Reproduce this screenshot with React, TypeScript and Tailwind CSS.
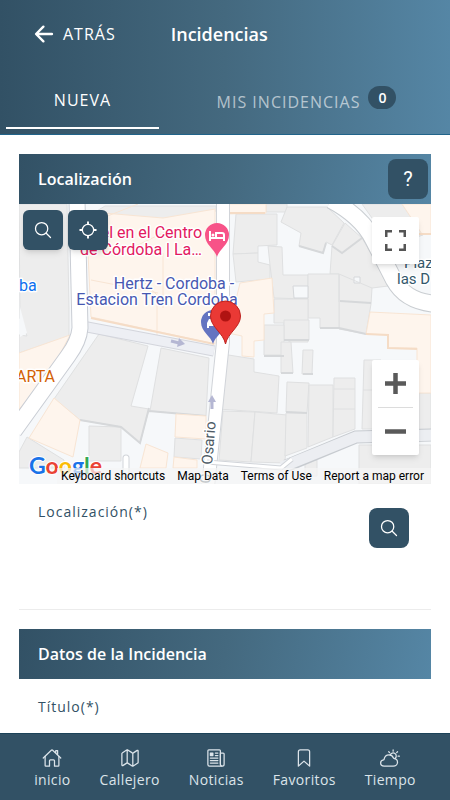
import { useState } from "react";
import {
  IoArrowBack,
  IoBookmarkOutline,
  IoHomeOutline,
  IoLocateOutline,
  IoMapOutline,
  IoNewspaperOutline,
  IoPartlySunnyOutline,
  IoSearchOutline,
} from "react-icons/io5";

const navItems = [
  { label: "inicio", icon: IoHomeOutline },
  { label: "Callejero", icon: IoMapOutline },
  { label: "Noticias", icon: IoNewspaperOutline },
  { label: "Favoritos", icon: IoBookmarkOutline },
  { label: "Tiempo", icon: IoPartlySunnyOutline },
];

function SectionHeading({ title, children }: { title: string; children?: React.ReactNode }) {
  return (
    <div className="flex h-[50px] items-center justify-between bg-linear-100 from-[#325165] via-[#44697f] to-[#5586a5] pl-[19px] pr-[3px]">
      <h2 className="text-base font-semibold text-white">{title}</h2>
      {children}
    </div>
  );
}

function StreetMap() {
  return (
    <svg
      viewBox="19 204 412 280"
      preserveAspectRatio="xMidYMid slice"
      className="block h-full w-full"
      fontFamily="Roboto, sans-serif"
      aria-label="Mapa"
      role="img"
    >
      <rect x="-200" y="204" width="900" height="280" fill="#f6f8fa" />

      {/* buildings */}
      <g fill="#ededed" stroke="#dfe0e1" strokeWidth="1">
        <path d="M19 204h48l2 105v27L19 353v-18l8 1-7-18z" />
        <path d="M20 337l7-4-7-26z" fill="#f6f8fa" stroke="none" />
        <path d="M99 334l49 12-17 60 18 3-9 34-19-16-41-7-26-21z" />
        <path d="M161 348l48 10-3 58-56-5z" />
        <path d="M89 426l32 1v34H89z" />
        <path d="M27 437l37 23v8H19v-16z" />
        <path d="M160 206h56v5l-57 10-58-2-9-5 13-8z" />
        <path d="M222 354l32 5v13l25 4-2 37-59-4z" />
        <path d="M223 411l32 1-4 50-32-2z" />
        <path d="M255 412l32 3-2 48-34-1z" />
        <path d="M236 214h41v31l-19 1v7l-25 1z" />
        <path d="M233 254l25-1v9l12 3v14l-34 3z" />
        <path d="M268 246l14 1 1 28h25v24l-34-1-4-33z" />
        <path d="M266 204h21v8h-21z" />
        <path d="M287 207h40l17 16-12 22-6-3-3 11-24-7 2-13-20-11z" />
        <path d="M345 223l17 15 11 19 15 29-16 2-1 16-5 30-27-5v-55h-9l2-28z" />
        <path d="M308 274h31v54h-19v-10h-12z" />
        <path d="M274 299h34v43h-18l-6-4v-15h-10z" />
        <path d="M284 320h25v20h-25z" />
        <path d="M264 325h20v30h-20z" />
        <path d="M281 342h10l2 31h-12z" />
        <path d="M303 350h10l-1 24h-10z" />
        <path d="M287 382l22 1-2 30-21-1z" />
        <path d="M286 413h21v35l-22 8z" />
        <path d="M309 385h24v52l-25 10z" />
        <path d="M334 378h21v51l-22 8z" />
        <path d="M364 360h17v69h-19z" />
        <path d="M419 393h12v39h-12zM359 445h72v39h-72z" />
        <path d="M362 204h40l21 31-9 3-37-13z" />
        <path d="M175 438l27 2-1 19-27-2z" />
        <path d="M305 460h12v16h-12z" />
      </g>
      <g fill="#f6f8fa" stroke="#d5d7da">
        <path d="M293 286h15v12h-14z" />
        <path d="M354 277h6v6h-6z" />
      </g>
      <path
        d="M339 274l33 14M339 274v28M334 389h21M334 409h21M363 390h18"
        fill="none"
        stroke="#dfe0e1"
      />
      <path
        d="M332 246l10 7 20-15M340 301l31 2M299 246l24 7 3-10M320 328h19l27 6M264 356h20M284 340h25M281 373h12M303 374h10M286 412l21 1M149 411l57 5M80 420l41 7 19 16 9-35"
        fill="none"
        stroke="#d6d8da"
        strokeWidth="2"
      />

      {/* commercial blocks */}
      <g fill="#fef5ed" stroke="#f8e5d4">
        <path d="M92 212l71 6 52-9v135l-124-27-3-64z" />
        <path d="M105 217l33-13M92 245l23 11 52-25M163 253v55M91 280l67 13M140 278l17 17v43" fill="none" />
        <path d="M19 353l51-18-24 46-27 28z" />
        <path d="M54 398l26 22-7 37-44-19z" />
        <path d="M176 414l30 2v23l-31-2z" />
        <path d="M174 457l23 3v8h-24z" />
        <path d="M146 444l22 9-2 15h-26z" />
        <path d="M225 204h41v9l-41 1z" />
        <path d="M240 283l32-5 2 35-10 1v26l-10 1v16l-12-1v-20l-14-3z" />
        <path d="M370 312l61 3v78h-14v-45h-29v-13l-22-1z" />
        <path d="M402 204h29v30h-9z" />
      </g>
      <path d="M366 334l22 1v13l29 1M412 234h19M91 318l123 26M225 213h40" fill="none" stroke="#f5dcc6" strokeWidth="2" />

      {/* streets */}
      <path d="M82 326l132 25" fill="none" stroke="#d3d5dc" strokeWidth="11" />
      <path d="M82 326l132 25" fill="none" stroke="#edeff4" strokeWidth="9" />
      <path d="M286 466l70-29 78-2" fill="none" stroke="#c7cbd0" strokeWidth="13" />
      <path d="M282 467l74-30 80-2" fill="none" stroke="#eceef2" strokeWidth="11" />
      <g fill="none" strokeLinejoin="round">
        <path d="M77 200l3 128q-1 13-12 28l-54 75" stroke="#c9cdd4" strokeWidth="17" />
        <path d="M77 200l3 128q-1 13-12 28l-54 75" stroke="#fff" strokeWidth="15" />
        <path d="M223 200v142l-15 145" stroke="#d1d4d9" strokeWidth="14" />
        <path d="M223 200v142l-15 145" stroke="#fff" strokeWidth="12" />
        <path d="M331 200q30 16 42 39l21 41q12 22 43 24" stroke="#c9cdd1" strokeWidth="18" />
        <path d="M331 200q30 16 42 39l21 41q12 22 43 24" stroke="#fff" strokeWidth="16" />
        <path d="M207 462l74 6 11-9" stroke="#d1d4d9" strokeWidth="5" />
        <path d="M207 462l74 6 11-9" stroke="#fff" strokeWidth="3" />
        <path d="M126 475v-17" stroke="#d1d4d9" strokeWidth="7" strokeLinecap="round" />
        <path d="M126 475v-17" stroke="#fff" strokeWidth="5" strokeLinecap="round" />
      </g>
      <g stroke="#b5b7d3" strokeWidth="3" fill="#b5b7d3">
        <path d="M171 341l8 2" />
        <path d="M179 338l6 6-8 3z" stroke="none" />
        <path d="M212 409v-8" />
        <path d="M208 402l4-7 4 7z" stroke="none" />
      </g>

      {/* place names */}
      <g fontSize="16" stroke="#fff" strokeWidth="3" strokeLinejoin="round" paintOrder="stroke">
        <g fill="#e3195f" textAnchor="end">
          <text x="202" y="238">Hotel en el Centro</text>
          <text x="202" y="255">de Córdoba | La…</text>
        </g>
        <g fill="#4758b1" textAnchor="middle">
          <text x="174" y="289">Hertz - Cordoba -</text>
          <text x="157" y="305">Estacion Tren Cordoba</text>
        </g>
        <text x="19" y="291" fill="#0d6fee">ba</text>
        <text x="55" y="382" fill="#d35f06" textAnchor="end">ARTA</text>
        <g fill="#33586c" fontSize="15">
          <text x="404" y="268">Plaz</text>
          <text x="397" y="284">las D</text>
        </g>
        <text transform="translate(212 465) rotate(-85)" fill="#4e5b66" fontSize="15">Osario</text>
        <text transform="translate(210 484) rotate(-85)" fill="#4e5b66" fontSize="15">C</text>
      </g>

      {/* hotel pin */}
      <path d="M217 257c-2-8-12-12-12-22a12 12 0 0 1 24 0c0 10-10 14-12 22z" fill="#f75388" />
      <path d="M210 231v10M210 238h14v3M224 238v-3q0-2-2-2h-6v4" fill="none" stroke="#fff" strokeWidth="2" />
      <circle cx="213" cy="235" r="1.5" fill="#fff" />
      {/* car rental pin */}
      <path d="M213 344c-2-8-12-12-12-22a12 12 0 0 1 24 0c0 10-10 14-12 22z" fill="#6474c1" />
      <path d="M207 328v-5l2-4h8v9h-2v-2h-6v2zM208 313h7v3h-7z" fill="#fff" />
      {/* selected point */}
      <path
        d="M225.500 344c-2-11-15-17-15-28a15 15 0 0 1 30 0c0 11-13 17-15 28z"
        fill="#ea3935"
        stroke="#bd211e"
      />
      <circle cx="225.500" cy="316" r="5.500" fill="#b01312" />

      <text
        x="29"
        y="474"
        fontFamily="Lato, sans-serif"
        fontSize="23"
        fontWeight="700"
        stroke="#fff"
        strokeWidth="2"
        paintOrder="stroke"
      >
        <tspan fill="#1a73e8">G</tspan><tspan fill="#ea4335">o</tspan><tspan fill="#fbbc04">o</tspan><tspan fill="#1a73e8">g</tspan><tspan fill="#34a853">l</tspan><tspan fill="#ea4335">e</tspan>
      </text>
    </svg>
  );
}

export default function App() {
  const [tab, setTab] = useState("nueva");

  return (
    <div className="flex h-screen flex-col bg-white font-['Open_Sans',sans-serif] text-[#325165]">
      <header className="flex h-[135px] shrink-0 flex-col justify-between border-b border-[#21648a] bg-linear-to-r from-[#325165] via-[#44697f] to-[#5586a5] text-white">
        <div className="flex h-[67px] items-center gap-[55px] pl-[31px]">
          <button className="flex items-center gap-[6px] text-base tracking-[1px]">
            <IoArrowBack size={26} />
            ATRÁS
          </button>
          <h1 className="text-lg font-semibold">Incidencias</h1>
        </div>
        <div className="flex h-[62px] items-stretch pl-[6px] pb-[5px]">
          <button
            onClick={() => setTab("nueva")}
            className={`w-[153px] border-b-2 text-base tracking-[1px] ${tab === "nueva" ? "border-white" : "border-transparent text-white/60"}`}
          >
            NUEVA
          </button>
          <button
            onClick={() => setTab("mis")}
            className={`flex flex-1 items-center justify-center gap-2 border-b-2 pl-1 pt-1 text-base tracking-[1px] ${tab === "mis" ? "border-white" : "border-transparent text-white/60"}`}
          >
            MIS INCIDENCIAS
            <span className="mb-2 flex h-[23px] w-7 items-center justify-center rounded-full bg-[#325165] text-sm font-semibold tracking-normal text-white">
              0
            </span>
          </button>
        </div>
      </header>

      <main className="min-h-0 flex-1 overflow-y-auto px-[19px] pt-[19px] [scrollbar-width:none]">
        <section className="border-b border-[#ececec]">
          <SectionHeading title="Localización">
            <button className="h-10 w-10 rounded-lg bg-[#325165] font-[Roboto,sans-serif] text-xl text-white" aria-label="Ayuda">
              ?
            </button>
          </SectionHeading>

          <div className="relative h-[280px] overflow-hidden">
            <StreetMap />
            <div className="absolute left-1 top-[6px] flex gap-[5px]">
              <button className="flex h-10 w-10 items-center justify-center rounded-md bg-[#325165] text-white shadow-md" aria-label="Buscar">
                <IoSearchOutline size={20} />
              </button>
              <button className="flex h-10 w-10 items-center justify-center rounded-md bg-[#325165] text-white shadow-md" aria-label="Mi ubicación">
                <IoLocateOutline size={20} />
              </button>
            </div>
            <button className="absolute right-3 top-[13px] flex h-[47px] w-[47px] items-center justify-center rounded-xs bg-white shadow-md" aria-label="Pantalla completa">
              <svg width="21" height="21" viewBox="0 0 21 21" fill="none" stroke="#555" strokeWidth="2.500">
                <path d="M1.250 7V1.250H7M14 1.250h5.750V7M19.750 14v5.750H14M7 19.750H1.250V14" />
              </svg>
            </button>
            <div className="absolute bottom-[29px] right-3 flex w-[47px] flex-col items-center rounded-xs bg-white shadow-md">
              <button className="flex h-[47px] w-full items-center justify-center" aria-label="Acercar">
                <svg width="21" height="21" viewBox="0 0 21 21" fill="none" stroke="#5a5a5a" strokeWidth="4.500">
                  <path d="M0 10.500h21M10.500 0v21" />
                </svg>
              </button>
              <div className="h-px w-[35px] bg-[#dcdcdc]" />
              <button className="flex h-[47px] w-full items-center justify-center" aria-label="Alejar">
                <svg width="21" height="21" viewBox="0 0 21 21" fill="none" stroke="#5a5a5a" strokeWidth="4.500">
                  <path d="M0 10.500h21" />
                </svg>
              </button>
            </div>
            <div className="absolute bottom-0 right-0 flex h-4 items-center gap-3 bg-[#f5f5f5]/70 pl-1 pr-[7px] font-[Roboto,sans-serif] text-xs text-black">
              <button>Keyboard shortcuts</button>
              <button>Map Data</button>
              <a href="#terms">Terms of Use</a>
              <a href="#report">Report a map error</a>
            </div>
          </div>

          <div className="flex h-[125px] items-start justify-between pl-[19px] pr-[22px] pt-[18px]">
            <div className="flex min-w-0 flex-1 flex-col">
              <label htmlFor="localizacion" className="text-sm tracking-[1px]">
                Localización(*)
              </label>
              <input id="localizacion" className="mt-2 h-8 w-full bg-transparent text-sm outline-none" />
            </div>
            <button className="mt-[6px] flex h-10 w-10 shrink-0 items-center justify-center rounded-lg bg-[#325165] text-white" aria-label="Buscar dirección">
              <IoSearchOutline size={20} />
            </button>
          </div>
        </section>

        <section className="mt-[19px]">
          <SectionHeading title="Datos de la Incidencia" />
          <div className="flex flex-col px-[19px] pt-[18px]">
            <label htmlFor="titulo" className="text-sm tracking-[1px]">
              Título(*)
            </label>
            <input id="titulo" className="mt-2 h-8 w-full bg-transparent text-sm outline-none" />
          </div>
        </section>
      </main>

      <nav className="flex h-[67px] shrink-0 items-center justify-center gap-[29px] border-t border-[#1c4258] bg-[#325165] pt-1 text-[#dce4ea]">
        {navItems.map(({ label, icon: Icon }) => (
          <a key={label} href={`#${label.toLowerCase()}`} className="flex flex-col items-center gap-[2px] text-sm tracking-wide">
            <Icon size={20} />
            {label}
          </a>
        ))}
      </nav>
    </div>
  );
}
